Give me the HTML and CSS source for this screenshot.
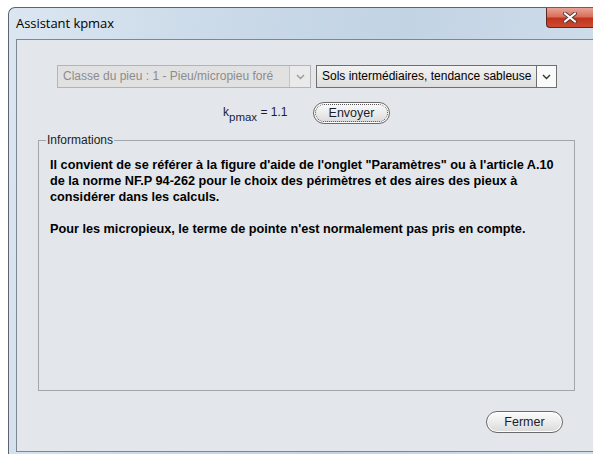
FILE: index.html
```html
<!DOCTYPE html>
<html lang="fr">
<head>
<meta charset="utf-8">
<title>Assistant kpmax</title>
<link rel="stylesheet" href="styles.css">
</head>
<body>
<div class="window">
  <div class="titlebar">
    <span class="title">Assistant kpmax</span>
    <button class="close" aria-label="Fermer la fenêtre">
      <svg width="14" height="11" viewBox="0 0 14 11">
        <path d="M2 1.5 L12 9.5 M12 1.5 L2 9.5" stroke="#5a3a36" stroke-width="4" stroke-linecap="round"/>
        <path d="M2 1.5 L12 9.5 M12 1.5 L2 9.5" stroke="#ffffff" stroke-width="2.2" stroke-linecap="round"/>
      </svg>
    </button>
  </div>
  <div class="client">
    <div class="combos">
      <div class="combo disabled">
        <span class="combo-text">Classe du pieu : 1 - Pieu/micropieu foré</span>
        <span class="combo-arrow"><svg width="9" height="6" viewBox="0 0 9 6"><path d="M1 1 L4.5 4.5 L8 1" fill="none" stroke="#9a9a9a" stroke-width="1.4"/></svg></span>
      </div>
      <div class="combo">
        <span class="combo-text">Sols intermédiaires, tendance sableuse</span>
        <span class="combo-arrow"><svg width="9" height="6" viewBox="0 0 9 6"><path d="M1 1 L4.5 4.5 L8 1" fill="none" stroke="#333" stroke-width="1.4"/></svg></span>
      </div>
    </div>
    <div class="result">
      <span class="kp">k<sub>pmax</sub> = 1.1</span>
      <button class="btn focus"><span>Envoyer</span></button>
    </div>
    <fieldset class="group">
      <legend>Informations</legend>
      <p>Il convient de se référer à la figure d'aide de l'onglet "Paramètres" ou à l'article A.10 de la norme NF.P 94-262 pour le choix des périmètres et des aires des pieux à considérer dans les calculs.</p>
      <p>Pour les micropieux, le terme de pointe n'est normalement pas pris en compte.</p>
    </fieldset>
    <div class="footer">
      <button class="btn"><span>Fermer</span></button>
    </div>
  </div>
</div>
</body>
</html>
```

FILE: styles.css
```css
html, body {
  margin: 0;
  padding: 0;
  background: #ffffff;
  overflow: hidden;
}

.window {
  margin: 7px 0 0 8px;
  width: 588px;
  height: 460px;
  box-sizing: border-box;
  border: 1px solid #5d6470;
  border-right: none;
  border-radius: 7px 0 0 0;
  background: linear-gradient(100deg, #dbe6f1 0%, #c9d9e8 35%, #c2d3e4 60%, #d3e0ec 100%);
  padding: 0 0 0 7px;
  display: flex;
  flex-direction: column;
}

.titlebar {
  height: 31px;
  display: flex;
  align-items: flex-start;
  flex-shrink: 0;
}

.title {
  font-family: "Open Sans", "Noto Sans", sans-serif;
  font-size: 13px;
  color: #000;
  margin-top: 6px;
  letter-spacing: -0.05px;
}

.close {
  margin-left: auto;
  width: 50px;
  height: 20px;
  border: 1px solid #5a2a22;
  border-top: none;
  border-right: none;
  border-radius: 0 0 0 4px;
  background: linear-gradient(#e8a496 0%, #d8705c 45%, #c0341c 55%, #cc4a30 100%);
  display: flex;
  align-items: center;
  justify-content: center;
  padding: 0 4px 0 0;
}

.client {
  height: 413px;
  flex-shrink: 0;
  box-sizing: border-box;
  border-top: 1px solid #7d8792;
  border-left: 1px solid #7d8792;
  border-bottom: 1px solid #7d8792;
  background: #e3e7eb;
  font-family: "Liberation Sans", Arial, sans-serif;
  font-size: 12px;
}

.combos {
  display: flex;
  gap: 5px;
  margin: 25px 0 0 40px;
}

.combo {
  height: 23px;
  box-sizing: border-box;
  display: flex;
  border: 1px solid #6f6f6f;
  background: linear-gradient(#f2f2f2, #dedede);
}

.combo.disabled {
  width: 254px;
  border-color: #b4b4b4;
  background: #e1e1e1;
}

.combo:not(.disabled) {
  width: 241px;
}

.combo-text {
  flex: 1;
  padding-left: 5px;
  line-height: 21px;
  font-size: 12px;
  color: #000;
  white-space: nowrap;
  overflow: hidden;
}

.combo.disabled .combo-text {
  color: #8c8c8c;
}

.combo-arrow {
  width: 19px;
  border-left: 1px solid #6f6f6f;
  background: #fafafa;
  display: flex;
  align-items: center;
  justify-content: center;
}

.combo.disabled .combo-arrow {
  width: 20px;
  border-left-color: #c4c4c4;
  background: #eaeaea;
}

.result {
  display: flex;
  align-items: center;
  margin: 14px 0 0 206px;
  height: 22px;
}

.kp {
  color: #1c1c3a;
  font-size: 12px;
  width: 90px;
  position: relative;
  top: -1px;
}

.kp sub {
  font-size: 11.5px;
  vertical-align: -5px;
  line-height: 0;
}

.btn {
  height: 22px;
  width: 77px;
  box-sizing: border-box;
  border: 1px solid #6a6a6a;
  border-radius: 11px;
  background: linear-gradient(#fbfbfb 0%, #ececec 50%, #d9d9d9 100%);
  box-shadow: inset 0 0 0 1px #ffffff;
  font-family: "Liberation Sans", Arial, sans-serif;
  font-size: 12.5px;
  color: #1b1b2e;
  padding: 1px;
  display: flex;
  align-items: stretch;
}

.btn span {
  flex: 1;
  display: flex;
  align-items: center;
  justify-content: center;
  border-radius: 9px;
  border: 1px dotted transparent;
}

.btn.focus span {
  border-color: #555;
}

.group {
  margin: 10px 0 0 21px;
  width: 537px;
  height: 257px;
  box-sizing: border-box;
  border: 1px solid #a3a6aa;
  padding: 11px 10px 0 11px;
}

.group legend {
  font-size: 12px;
  color: #222;
  padding: 0 1px;
  margin-left: -4px;
  line-height: 12px;
}

.group p {
  margin: 0 0 16px;
  font-weight: bold;
  font-size: 12.7px;
  line-height: 16px;
  color: #000;
}

.footer {
  display: flex;
  justify-content: flex-start;
  padding: 20px 0 0 469px;
}
```
